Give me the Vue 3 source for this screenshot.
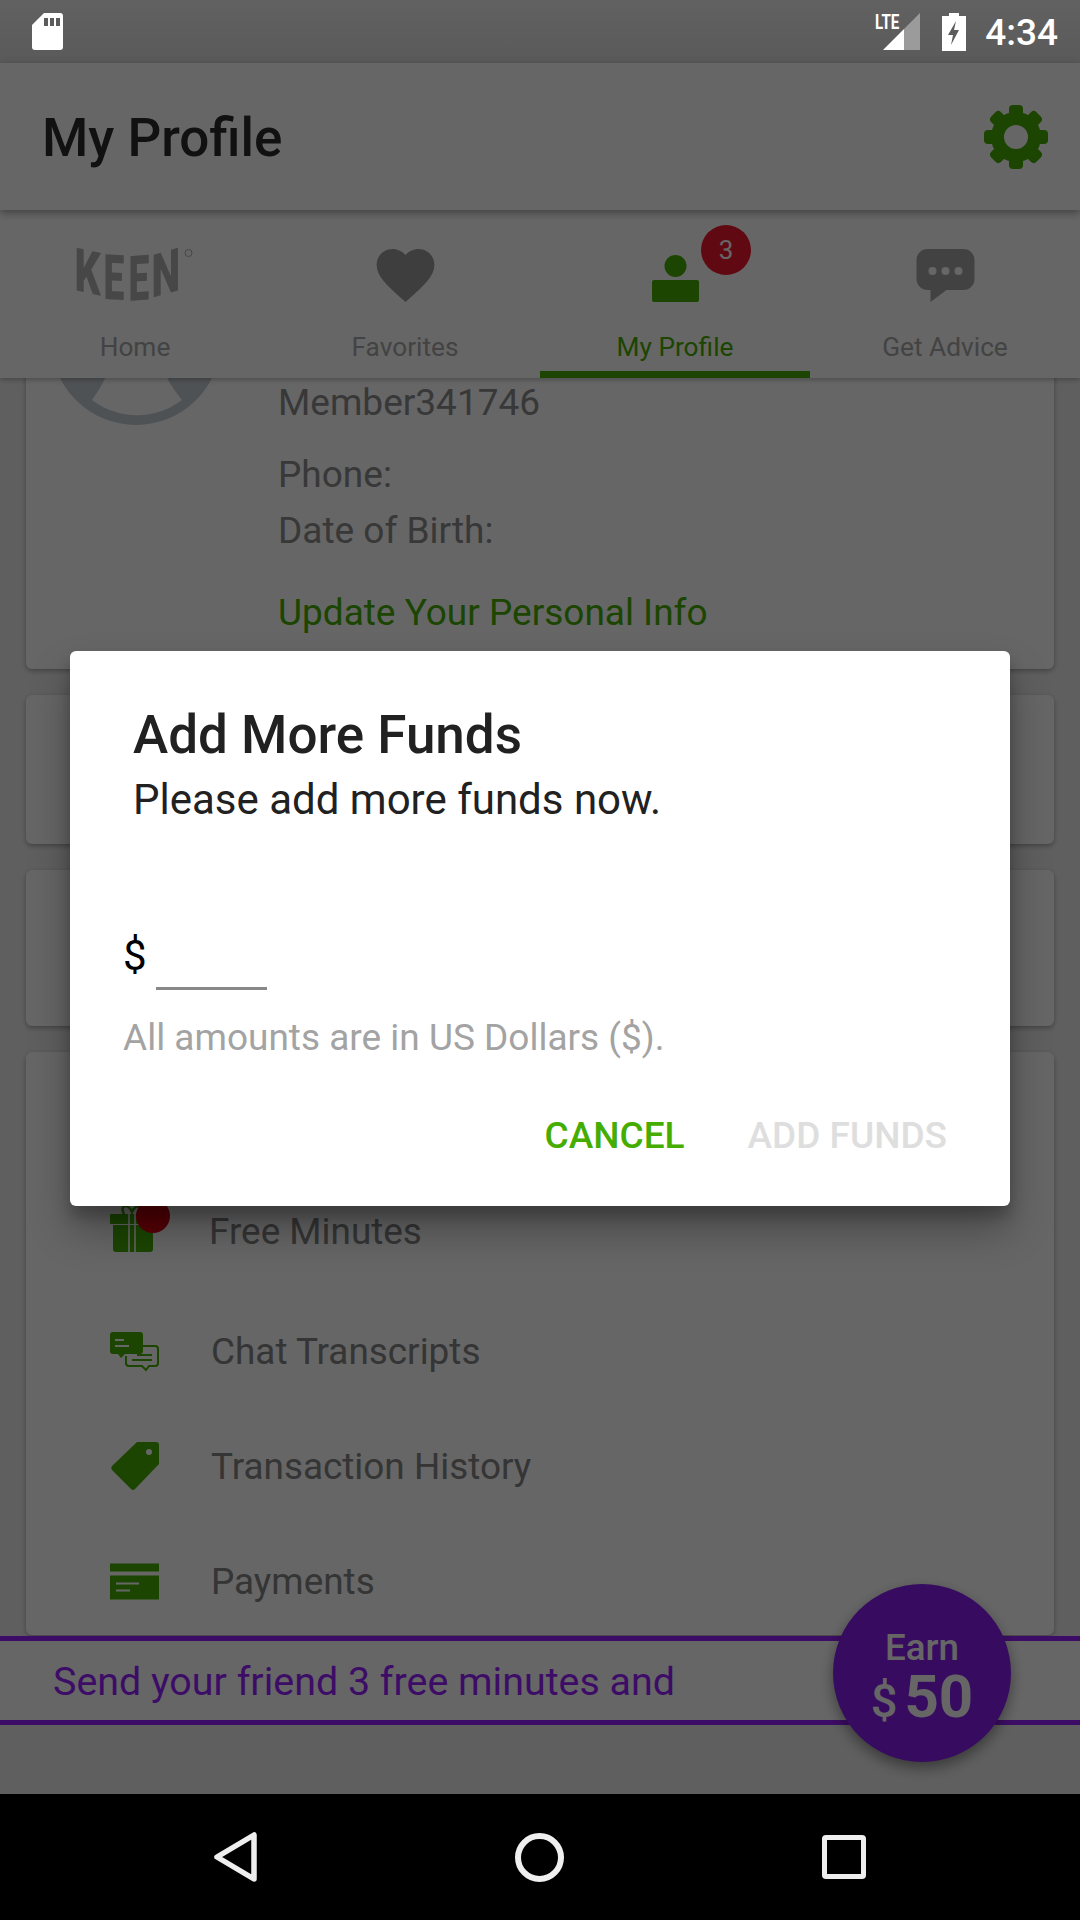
<script setup>
const teeth = [0, 45, 90, 135, 180, 225, 270, 315]
const keen = [
  { c: 'K', t: 'translate(74,41) skewY(12) scale(.68,1)' },
  { c: 'E', t: 'translate(103,50) skewY(3) scale(.62,1.05)' },
  { c: 'E', t: 'translate(128,52) skewY(-4) scale(.62,1.05)' },
  { c: 'N', t: 'translate(151,49) skewY(-16) scale(.68,1)' }
]
</script>

<template>
  <div class="screen">
    <header class="status">
      <svg class="sd" viewBox="0 0 31 37">
        <path d="M12 0H28a3 3 0 0 1 3 3V34a3 3 0 0 1-3 3H3a3 3 0 0 1-3-3V12Z" fill="#fff" />
        <path d="M12 5h4v8h-4zM18 5h4v8h-4zM24 5h4v8h-4z" fill="#5c5c5c" />
      </svg>
      <div class="status-right">
        <div class="net">
          <span class="lte">LTE</span>
          <svg class="signal" viewBox="0 0 37 37">
            <path d="M37 0V37H21V16Z" fill="#9b9b9b" />
            <path d="M21 16V37H0Z" fill="#fff" />
          </svg>
        </div>
        <svg class="battery" viewBox="0 0 24 38">
          <path d="M7 0h10v3h7v35H0V3h7Z" fill="#fff" />
          <path d="M14 8 6 22h5l-2 10 8-15h-5l2-9Z" fill="#5c5c5c" />
        </svg>
        <span class="time">4:34</span>
      </div>
    </header>

    <main class="main">
      <div class="appbar">
        <h1 class="page-title">My Profile</h1>
        <svg class="gear" viewBox="-33 -33 66 66">
          <g fill="var(--green)">
            <rect v-for="a in teeth" :key="a" x="-7" y="-32" width="14" height="18" rx="4" :transform="`rotate(${a})`" />
          </g>
          <circle r="18.5" fill="none" stroke="var(--green)" stroke-width="13" />
        </svg>
      </div>

      <nav class="tabs">
        <div class="tab">
          <svg class="tab-icon" viewBox="72.5 0 125 53">
            <text v-for="(l, i) in keen" :key="i" class="keen" :transform="l.t">{{ l.c }}</text>
            <circle cx="188" cy="4" r="3.5" fill="none" stroke="#b0b0b0" stroke-width="1" />
          </svg>
          <span>Home</span>
        </div>
        <div class="tab">
          <svg class="tab-icon" viewBox="2 3 20 18.35" preserveAspectRatio="xMidYMid meet">
            <path d="M12 21.35l-1.45-1.32C5.4 15.36 2 12.28 2 8.5 2 5.42 4.42 3 7.5 3c1.74 0 3.41.81 4.5 2.09C13.09 3.81 14.76 3 16.5 3 19.58 3 22 5.42 22 8.5c0 3.78-3.4 6.86-8.55 11.54L12 21.35z" fill="#9c9c9c" />
          </svg>
          <span>Favorites</span>
        </div>
        <div class="tab active">
          <svg class="tab-icon" viewBox="0 0 47 53">
            <circle cx="23.5" cy="17" r="11" fill="var(--green)" />
            <rect y="31" width="47" height="22" rx="2" fill="var(--green)" />
          </svg>
          <span>My Profile</span>
          <b class="badge">3</b>
        </div>
        <div class="tab">
          <svg class="tab-icon" viewBox="0 0 58 53">
            <path d="M11 0H47A11 11 0 0 1 58 11V30A11 11 0 0 1 47 41H30L14 53V41H11A11 11 0 0 1 0 30V11A11 11 0 0 1 11 0Z" fill="#a6a6a6" />
            <circle cx="16" cy="22" r="4" fill="#fff" />
            <circle cx="29" cy="22" r="4" fill="#fff" />
            <circle cx="42" cy="22" r="4" fill="#fff" />
          </svg>
          <span>Get Advice</span>
        </div>
      </nav>

      <div class="scroll">
        <div class="scroll-inner">
          <section class="card card-profile">
            <svg class="avatar" viewBox="0 0 170 170">
              <circle cx="85" cy="85" r="85" fill="#c6ccd4" />
              <path d="M41 145C55 125 60 115 60 85H110C110 115 115 125 131 145A74 74 0 0 1 41 145Z" fill="#fff" />
            </svg>
            <div class="info">
              <p>Member341746</p>
              <p class="gap-small">Phone:</p>
              <p>Date of Birth:</p>
              <p class="update">Update Your Personal Info</p>
            </div>
          </section>
          <section class="card card-b"></section>
          <section class="card card-c"></section>
          <section class="card card-list">
            <div class="row row-first">
              <div class="gift-wrap">
                <svg class="gift" viewBox="0 0 46 47">
                  <path d="M14 9C9 0 18-2 22 7 25-1 33 0 28 9" fill="none" stroke="var(--green)" stroke-width="2.5" />
                  <rect y="9" width="46" height="10" rx="1" fill="var(--green)" />
                  <path d="M3 20H43V44a3 3 0 0 1-3 3H6a3 3 0 0 1-3-3Z" fill="var(--green)" />
                  <path d="M19 9V47M25 9V47" stroke="#fff" stroke-width="1.6" />
                </svg>
                <i class="gift-dot"></i>
              </div>
              <span>Free Minutes</span>
            </div>
            <div class="row">
              <svg class="row-icon" viewBox="0 0 49 39">
                <path d="M3 0H30a3 3 0 0 1 3 3V19a3 3 0 0 1-3 3H15l-4 4-3-4H3a3 3 0 0 1-3-3V3a3 3 0 0 1 3-3Z" fill="var(--green)" />
                <path d="M5 8h9M5 14h18" stroke="#fff" stroke-width="2" />
                <path d="M19 14H45a3 3 0 0 1 3 3V31a3 3 0 0 1-3 3H39l-3 4-4-4H19a3 3 0 0 1-3-3V24" fill="none" stroke="var(--green)" stroke-width="2" />
                <path d="M27 23h15M22 28h20" stroke="var(--green)" stroke-width="2" />
              </svg>
              <span>Chat Transcripts</span>
            </div>
            <div class="row">
              <svg class="row-icon" viewBox="0 0 49 49">
                <path d="M27 0H46a3 3 0 0 1 3 3V22L25 47a3 3 0 0 1-4 0L2 28a3 3 0 0 1 0-4Z" fill="var(--green)" />
                <circle cx="39" cy="10" r="3" fill="#fff" />
              </svg>
              <span>Transaction History</span>
            </div>
            <div class="row">
              <svg class="row-icon" viewBox="0 0 49 36">
                <rect width="49" height="8" fill="var(--green)" />
                <rect y="12" width="49" height="24" fill="var(--green)" />
                <path d="M6 20H29M6 27H20" stroke="#fff" stroke-width="2" />
              </svg>
              <span>Payments</span>
            </div>
          </section>
        </div>
      </div>

      <div class="banner">Send your friend 3 free minutes and</div>
      <div class="fab">
        <span class="earn">Earn</span>
        <span class="amount"><em>$</em>50</span>
      </div>

      <div class="scrim">
        <div class="dialog" role="dialog">
          <div class="dialog-head">
            <h2>Add More Funds</h2>
            <p>Please add more funds now.</p>
          </div>
          <div class="field">
            <span class="currency">$</span>
            <span class="input"></span>
          </div>
          <p class="helper">All amounts are in US Dollars ($).</p>
          <div class="actions">
            <span class="btn cancel">CANCEL</span>
            <span class="btn disabled">ADD FUNDS</span>
          </div>
        </div>
      </div>
    </main>

    <footer class="navbar">
      <svg class="nav-back" viewBox="0 0 44 50">
        <path d="M3 25 40 3V47Z" fill="none" stroke="#efefef" stroke-width="5.5" stroke-linejoin="round" />
      </svg>
      <span class="nav-home"></span>
      <span class="nav-recent"></span>
    </footer>
  </div>
</template>

<style>
html, body { margin: 0; padding: 0; background: #000; }
</style>

<style scoped>
.screen {
  --green: #45ad00;
  width: 1080px;
  height: 1920px;
  display: flex;
  flex-direction: column;
  overflow: hidden;
  font-family: Roboto, "Liberation Sans", sans-serif;
  color: #8f8f8f;
}
p, h1, h2 { margin: 0; font-weight: 400; }

.status {
  height: 63px;
  flex: none;
  background: linear-gradient(#616161, #5a5a5a);
  display: flex;
  justify-content: space-between;
  align-items: center;
  padding: 0 22px 0 32px;
}
.sd { width: 31px; height: 37px; }
.status-right { display: flex; align-items: center; }
.net { position: relative; width: 45px; height: 37px; margin-right: 22px; }
.signal { position: absolute; right: 0; top: 0; width: 37px; height: 37px; }
.lte {
  position: absolute;
  left: 0;
  top: -2px;
  font: 700 21px/22px Roboto, sans-serif;
  color: #fff;
  transform: scaleX(.72);
  transform-origin: left;
}
.battery { width: 24px; height: 38px; margin-right: 19px; }
.time { font-size: 37px; font-weight: 500; color: #fff; line-height: 46px; padding-top: 2px; }

.main {
  position: relative;
  flex: 1;
  min-height: 0;
  display: flex;
  flex-direction: column;
  background: #eee;
}
.appbar {
  position: relative;
  z-index: 3;
  height: 147px;
  flex: none;
  background: #fff;
  box-shadow: 0 3px 8px rgba(0,0,0,.35);
  display: flex;
  align-items: center;
  justify-content: space-between;
  padding: 0 31px 0 42px;
}
.page-title { font-size: 53px; font-weight: 500; color: #2b2b2b; padding-top: 2px; }
.gear { width: 66px; height: 66px; }

.tabs {
  position: relative;
  z-index: 2;
  height: 168px;
  flex: none;
  background: #fff;
  box-shadow: 0 2px 5px rgba(0,0,0,.25);
  display: grid;
  grid-template-columns: repeat(4, 1fr);
}
.tab {
  position: relative;
  display: flex;
  flex-direction: column;
  align-items: center;
  padding-top: 39px;
  font-size: 26.25px;
  line-height: 32px;
  color: #a8a8a8;
}
.tab-icon { height: 53px; width: 125px; margin-bottom: 29px; overflow: visible; }
.tab.active { color: var(--green); border-bottom: 7px solid var(--green); box-sizing: border-box; }
.keen { font: 900 60px Roboto, sans-serif; fill: #b2b2b2; }
.badge {
  position: absolute;
  left: 161px;
  top: 15px;
  width: 50px;
  height: 50px;
  border-radius: 50%;
  background: #f0182f;
  color: #fff;
  font-size: 26px;
  font-weight: 400;
  line-height: 50px;
  text-align: center;
}

.scroll { flex: 1; min-height: 0; overflow: hidden; }
.scroll-inner {
  margin-top: -138px;
  padding: 0 26px;
  display: flex;
  flex-direction: column;
  gap: 26px;
}
.card {
  background: #fff;
  border-radius: 6px;
  box-shadow: 0 2px 5px rgba(0,0,0,.3);
  flex: none;
}
.card-profile {
  height: 429px;
  box-sizing: border-box;
  display: flex;
  padding: 15px 0 0 25px;
  gap: 57px;
  font-size: 37px;
  line-height: 56px;
  color: #8c8c8c;
}
.avatar { width: 170px; height: 170px; flex: none; }
.info { padding-top: 120px; }
.gap-small { margin-top: 16px; }
.update { margin-top: 26px; color: var(--green); }
.card-b { height: 149px; }
.card-c { height: 156px; }
.card-list {
  height: 583px;
  box-sizing: border-box;
  padding: 122px 0 0 84px;
  font-size: 36.9px;
  color: #848484;
}
.row {
  height: 115px;
  display: flex;
  align-items: center;
  gap: 52px;
}
.row-first { margin-bottom: 5px; }
.row-icon { width: 49px; height: 49px; flex: none; }
.gift-wrap { position: relative; width: 47px; height: 47px; flex: none; margin-top: -6px; }
.gift { display: block; width: 46px; height: 47px; }
.gift-dot {
  position: absolute;
  left: 26px;
  top: -6px;
  width: 34px;
  height: 34px;
  border-radius: 50%;
  background: #d9000f;
}

.banner {
  position: absolute;
  left: 0;
  right: 0;
  top: 1573px;
  height: 77px;
  z-index: 1;
  background: #fff;
  border-top: 5px solid #9a1fff;
  border-bottom: 5px solid #9a1fff;
  padding: 2px 0 0 53px;
  font-size: 39.4px;
  line-height: 77px;
  color: #9a1fff;
}
.fab {
  position: absolute;
  left: 833px;
  top: 1521px;
  z-index: 1;
  width: 178px;
  height: 178px;
  border-radius: 50%;
  background: #8a1cf0;
  box-shadow: 0 6px 14px rgba(0,0,0,.4);
  color: #fff;
  display: flex;
  flex-direction: column;
  align-items: center;
  padding-top: 43px;
  box-sizing: border-box;
}
.earn { font-size: 36.75px; font-weight: 500; line-height: 42px; }
.amount { font-size: 60px; font-weight: 700; line-height: 64px; margin-top: -4px; }
.amount em { font-style: normal; font-weight: 500; font-size: 47px; margin-right: 7px; }

.scrim {
  position: absolute;
  inset: 0;
  z-index: 5;
  background: rgba(0,0,0,.6);
  display: flex;
  align-items: center;
  justify-content: center;
}
.dialog {
  width: 940px;
  height: 555px;
  box-sizing: border-box;
  background: #fff;
  border-radius: 6px;
  padding: 53px 63px 0 53px;
  box-shadow: 0 24px 40px rgba(0,0,0,.3), 0 10px 14px rgba(0,0,0,.2);
}
.dialog-head { margin-left: 10px; }
.dialog h2 { font-size: 53px; font-weight: 500; line-height: 62px; color: #212121; }
.dialog-head p { font-size: 42px; line-height: 56px; margin-top: 6px; color: #212121; }
.field { display: flex; align-items: flex-end; margin-top: 98px; }
.currency { font-size: 42px; line-height: 60px; color: #000; width: 33px; margin-bottom: 4px; }
.input { width: 111px; height: 56px; border-bottom: 3px solid #888; }
.helper { font-size: 37px; line-height: 48px; margin-top: 24px; color: #a3a3a3; }
.actions { display: flex; justify-content: flex-end; gap: 63px; margin-top: 50px; }
.btn { font-size: 37px; font-weight: 500; line-height: 48px; }
.cancel { color: #45ad00; }
.disabled { color: #dedede; }

.navbar {
  height: 126px;
  flex: none;
  background: #000;
  position: relative;
  display: flex;
  align-items: center;
}
.nav-back { width: 44px; height: 50px; margin-left: 214px; }
.nav-home {
  width: 49px;
  height: 49px;
  box-sizing: border-box;
  border: 6px solid #efefef;
  border-radius: 50%;
  margin-left: 257px;
}
.nav-recent {
  width: 44px;
  height: 44px;
  box-sizing: border-box;
  border: 5px solid #efefef;
  border-radius: 4px;
  margin-left: 258px;
}
</style>
